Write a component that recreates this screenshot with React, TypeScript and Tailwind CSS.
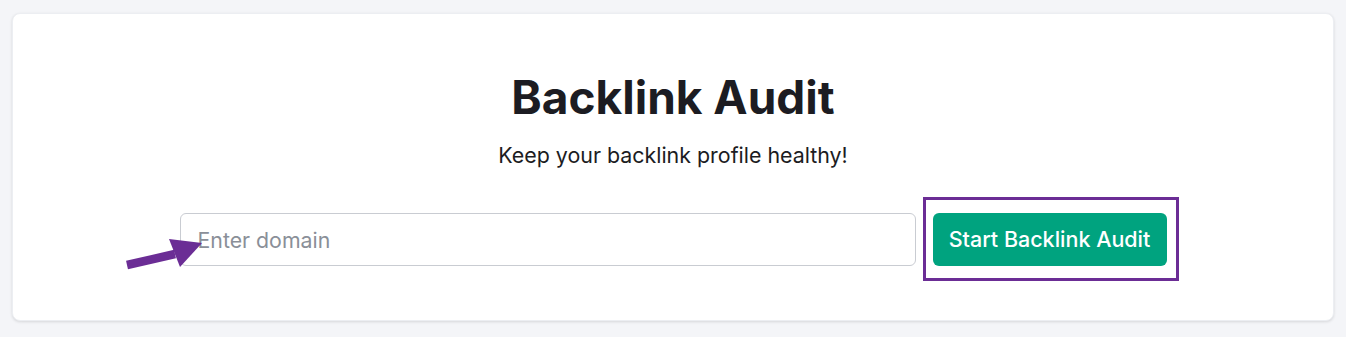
import React from "react";

export default function App() {
  return (
    <div className="w-[1346px] h-[337px] bg-[#f4f5f8] pt-[13px] px-[12px]" style={{ fontFamily: "Inter, 'Noto Sans', sans-serif" }}>
      <div className="relative h-[308px] bg-white rounded-lg shadow-[0_1px_3px_rgba(0,0,0,0.12)] border border-[#eceef2] flex flex-col items-center">
        <h1 className="mt-[52px] text-[46px] leading-[62px] font-bold text-[#1c1c22]">Backlink Audit</h1>
        <p className="mt-[13px] text-[21.4px] leading-[28px] text-[#1c1c22]">Keep your backlink profile healthy!</p>
        <div className="mt-[44px] flex items-center gap-[17px]">
          <div className="relative">
            <input
              placeholder="Enter domain"
              className="w-[736px] h-[53px] rounded-md border border-[#c9ccd2] px-[17px] text-[21.3px] text-[#1c1c22] placeholder:text-[#8a8f98] outline-none"
            />
            <svg className="absolute left-[-55px] top-[22px]" width="80" height="36" viewBox="0 0 80 36">
              <path d="M2 30 L50 19" stroke="#6b2d95" strokeWidth="8.5" strokeLinecap="butt" />
              <path d="M44 4 L77 8 L55 32 Z" fill="#6b2d95" />
            </svg>
          </div>
          <div className="relative">
            <button className="w-[234px] h-[53px] rounded-md bg-[#00a37f] text-white text-[21.5px] font-medium">Start Backlink Audit</button>
            <div className="absolute left-[-10px] top-[-16px] w-[256px] h-[84px] border-[3px] border-[#6b2d95]" />
          </div>
        </div>
      </div>
    </div>
  );
}
